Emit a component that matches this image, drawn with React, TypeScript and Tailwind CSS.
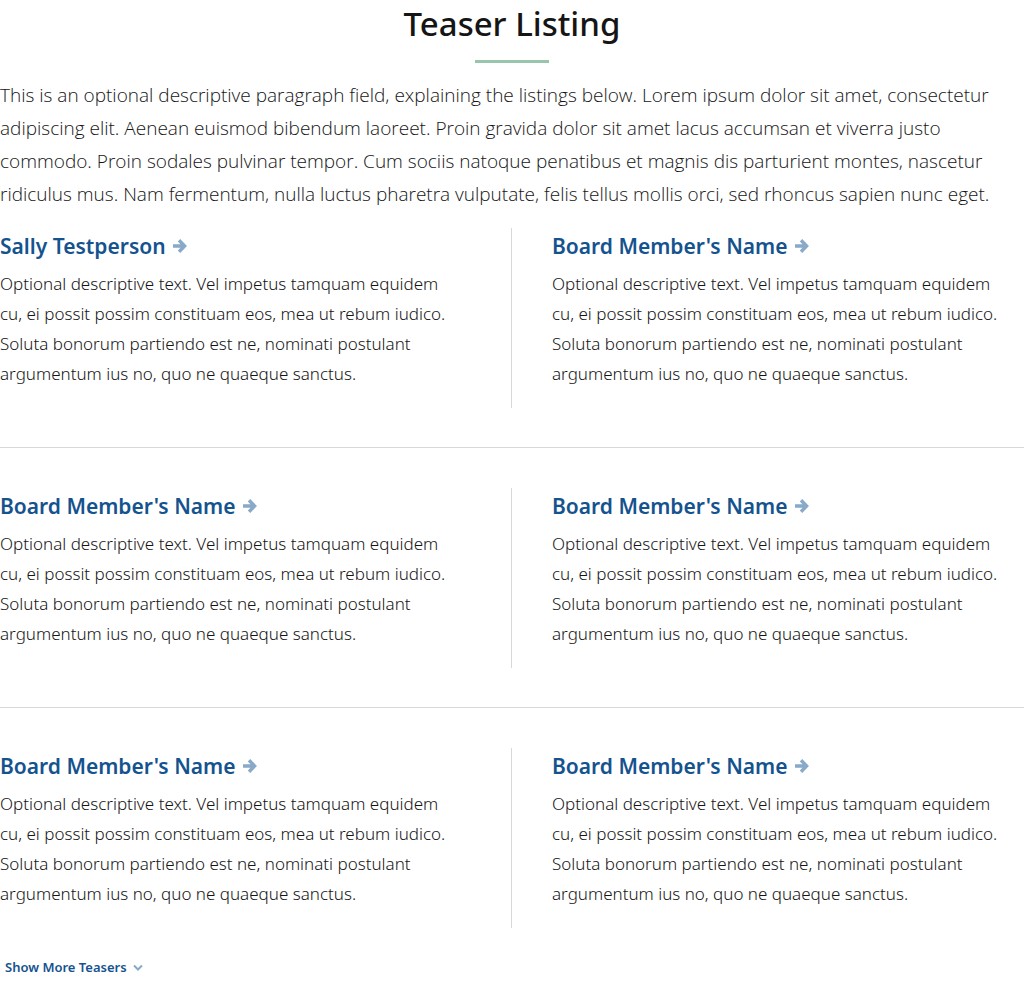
const intro = [
  "This is an optional descriptive paragraph field, explaining the listings below. Lorem ipsum dolor sit amet, consectetur",
  "adipiscing elit. Aenean euismod bibendum laoreet. Proin gravida dolor sit amet lacus accumsan et viverra justo",
  "commodo. Proin sodales pulvinar tempor. Cum sociis natoque penatibus et magnis dis parturient montes, nascetur",
  "ridiculus mus. Nam fermentum, nulla luctus pharetra vulputate, felis tellus mollis orci, sed rhoncus sapien nunc eget.",
];

const description = [
  "Optional descriptive text. Vel impetus tamquam equidem",
  "cu, ei possit possim constituam eos, mea ut rebum iudico.",
  "Soluta bonorum partiendo est ne, nominati postulant",
  "argumentum ius no, quo ne quaeque sanctus.",
];

const rows = [
  ["Sally Testperson", "Board Member's Name"],
  ["Board Member's Name", "Board Member's Name"],
  ["Board Member's Name", "Board Member's Name"],
];

function Lines({ lines }: { lines: string[] }) {
  return (
    <>
      {lines.map((line) => (
        <span key={line} className="block lg:whitespace-nowrap">
          {line}{" "}
        </span>
      ))}
    </>
  );
}

function ArrowIcon() {
  return (
    <svg viewBox="0 0 14 14" className="h-3.5 w-3.5 shrink-0 text-[#88a9c8]" fill="none" stroke="currentColor" strokeWidth="3.4" aria-hidden="true">
      <path d="M0 7h11M6 1.2 11.6 7 6 12.8" />
    </svg>
  );
}

function Teaser({ name }: { name: string }) {
  return (
    <article className="pb-[19px]">
      <h2 className="text-[21px] leading-9 font-semibold text-[#15538f]">
        <a href="#" className="inline-flex items-center gap-[7px]">
          {name}
          <ArrowIcon />
        </a>
      </h2>
      <p className="mt-[5px] text-[17px] leading-[30px] font-light">
        <Lines lines={description} />
      </p>
    </article>
  );
}

export default function App() {
  return (
    <main className="bg-white font-['Noto_Sans','Open_Sans',sans-serif] text-[#151515]">
      <header>
        <h1 className="pt-1 text-center text-[33px] leading-[40px] font-medium">Teaser Listing</h1>
        <div className="mx-auto mt-4 h-[3px] w-[74px] bg-[#98c5ab]" />
        <p className="mt-4 font-['Open_Sans',sans-serif] text-[19px] leading-[33px] font-light">
          <Lines lines={intro} />
        </p>
      </header>
      <div className="mt-[17px]">
        {rows.map((row, i) => (
          <section key={i} className={i > 0 ? "mt-[39px] border-t border-[#d8d8d8] pt-10" : ""}>
            <div className="grid grid-cols-2">
              <div className="border-r border-[#d8d8d8] pr-10">
                <Teaser name={row[0]} />
              </div>
              <div className="pl-10">
                <Teaser name={row[1]} />
              </div>
            </div>
          </section>
        ))}
      </div>
      <button type="button" className="mt-[30px] flex h-5 items-center gap-1.5 pl-[5px] text-[13px] font-semibold text-[#15538f]">
        Show More Teasers
        <svg viewBox="0 0 10 8" className="h-2 w-2.5 text-[#88a9c8]" fill="none" stroke="currentColor" strokeWidth="2" aria-hidden="true">
          <path d="m1 1.5 4 4 4-4" />
        </svg>
      </button>
    </main>
  );
}
